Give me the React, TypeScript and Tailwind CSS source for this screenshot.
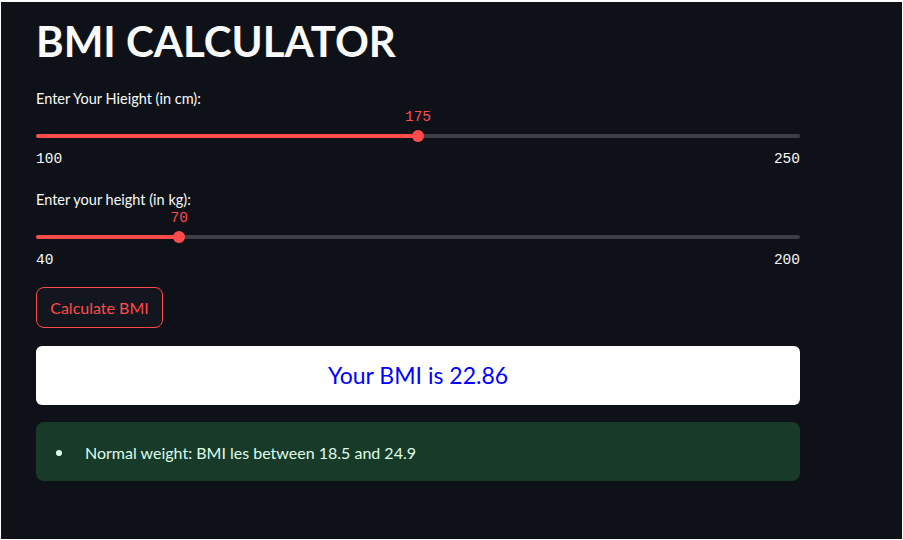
import { useState } from 'react';

type SliderProps = {
  label: string;
  min: number;
  max: number;
  value: number;
};

function Slider({ label, min, max, value }: SliderProps) {
  const pct = ((value - min) / (max - min)) * 100;

  return (
    <div>
      <div className="h-[19px] text-[14.5px] leading-[19px] text-[#fafafa]">{label}</div>
      <div className="relative h-[37px]">
        {/* value bubble */}
        <div
          className="absolute top-0 -translate-x-1/2 text-[14.5px] leading-[19px] text-[#ff4b4b]"
          style={{ left: `${pct}%`, fontFamily: '"Liberation Mono", monospace' }}
        >
          {value}
        </div>
        {/* track */}
        <div className="absolute left-0 right-0 top-[26px] h-[4px] rounded-full bg-[#3d3f47]" />
        <div
          className="absolute left-0 top-[26px] h-[4px] rounded-full bg-[#ff4b4b]"
          style={{ width: `${pct}%` }}
        />
        {/* thumb */}
        <div
          className="absolute top-[22px] h-[12px] w-[12px] -translate-x-1/2 rounded-full bg-[#ff4b4b]"
          style={{ left: `${pct}%` }}
        />
      </div>
      <div
        className="mt-[4px] flex h-[20px] justify-between text-[14.5px] leading-[20px] text-[#fafafa]"
        style={{ fontFamily: '"Liberation Mono", monospace' }}
      >
        <span>{min}</span>
        <span>{max}</span>
      </div>
    </div>
  );
}

export default function App() {
  const [height] = useState(175);
  const [weight] = useState(70);
  const bmi = weight / Math.pow(height / 100, 2);

  return (
    <div
      className="h-[540px] w-full overflow-hidden border-b border-l border-r border-t-2 border-white bg-[#0e1117] text-[#fafafa]"
      style={{ fontFamily: 'Lato, sans-serif' }}
    >
      <div className="ml-[35px] w-[764px] pt-[14px]">
        <h1 className="text-[42px] font-bold leading-[1.2]">BMI CALCULATOR</h1>

        <div className="mt-[23px]">
          <Slider label="Enter Your Hieight (in cm):" min={100} max={250} value={height} />
        </div>

        <div className="mt-[21px]">
          <Slider label="Enter your height (in kg):" min={40} max={200} value={weight} />
        </div>

        <button className="mt-[17px] flex h-[41px] w-[127px] items-center justify-center rounded-lg border border-[#ff4b4b] bg-[#13161e] text-[16px] text-[#ff4b4b]">
          Calculate BMI
        </button>

        <div className="mt-[18px] flex h-[59px] items-center justify-center rounded-md bg-white pb-[1px] text-[23px] text-[#0000ff]">
          Your BMI is {bmi.toFixed(2)}
        </div>

        <div className="mt-[17px] flex h-[59px] items-center rounded-lg bg-[#183a29] pt-[3px] pl-[20px] text-[16px] text-[#dffde9]">
          <span className="h-[6px] w-[6px] rounded-full bg-[#dffde9]" />
          <span className="ml-[23px]">Normal weight: BMI les between 18.5 and 24.9</span>
        </div>
      </div>
    </div>
  );
}
